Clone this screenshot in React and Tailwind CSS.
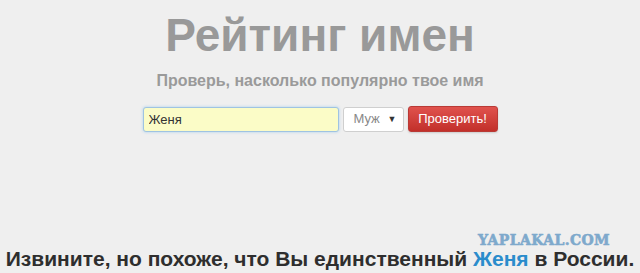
import React from "react";

const sans = "font-['Liberation_Sans',Arial,sans-serif]";

function SearchForm() {
  return (
    <div className="flex items-center justify-center gap-[4px]">
      <input
        type="text"
        defaultValue="Женя"
        className="w-[196px] h-[25px] px-[5px] text-[13px] text-[#333] bg-[#fbfcc7] border border-[#9fc3e2] rounded-[3px] shadow-[0_0_3px_rgba(82,168,236,0.45)] outline-none"
      />
      <div className="relative w-[61px] h-[25px] bg-white border border-[#cfcfcf] rounded-[3px] flex items-center pl-[10px] text-[13px] text-[#888]">
        Муж
        <span className="absolute right-[6px] top-[7px] text-[9px] leading-[9px] text-[#333]">▼</span>
      </div>
      <button
        type="button"
        className="w-[90px] h-[26px] rounded-[3px] border border-[#b93a36] bg-gradient-to-b from-[#e0524d] to-[#c22f2a] text-white text-[13px] shadow-[0_1px_2px_rgba(0,0,0,0.15)]"
      >
        Проверить!
      </button>
    </div>
  );
}

export default function App() {
  return (
    <div className={`relative w-[640px] h-[273px] overflow-hidden bg-[#efefef] ${sans} flex flex-col items-center`}>
      <h1 className="mt-[12px] text-[46px] leading-[46px] font-bold text-[#999]">
        Рейтинг имен
      </h1>
      <p className="mt-[14px] text-[16px] leading-[18px] font-bold text-[#9a9a9a]">
        Проверь, насколько популярно твое имя
      </p>
      <div className="mt-[16px]">
        <SearchForm />
      </div>
      <p className="mt-auto mb-[5px] text-[21px] leading-[19px] font-bold text-[#2e2e2e] whitespace-nowrap">
        Извините, но похоже, что Вы единственный{" "}
        <span className="text-[#2a8ccc]">Женя</span> в России.
      </p>
      <span className="absolute left-[478px] top-[235px] font-['DejaVu_Serif',serif] font-bold text-[14px] leading-[11px] text-[#7ea9cc] tracking-[0.4px] [-webkit-text-stroke:0.6px_#7ea9cc]">
        YAPLAKAL.COM
      </span>
    </div>
  );
}
